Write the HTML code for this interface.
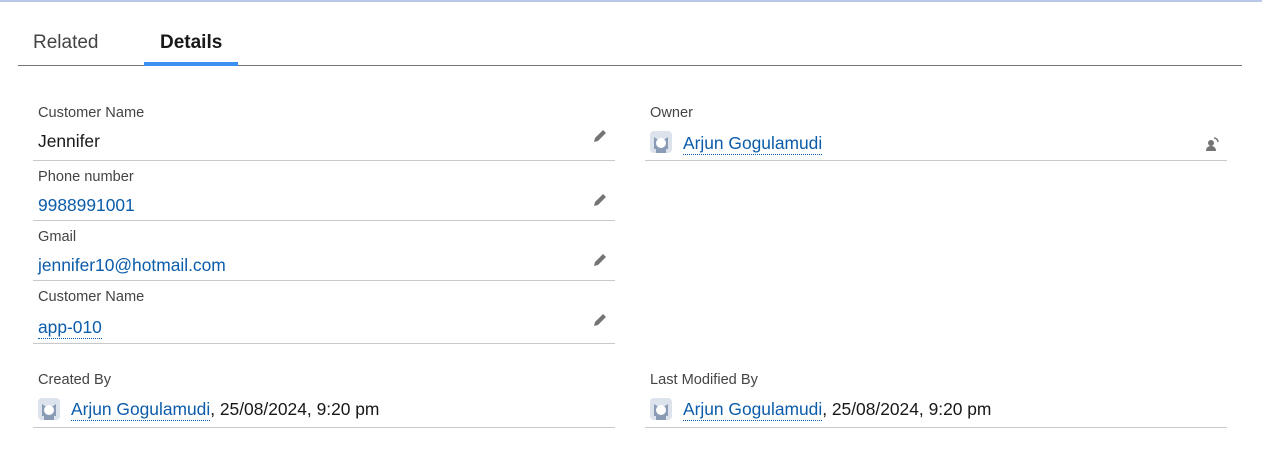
<!DOCTYPE html>
<html><head><style>
body{margin:0;width:1262px;height:474px;background:#fff;font-family:"Liberation Sans",sans-serif;position:relative;overflow:hidden;color:#181818}
.top{position:absolute;left:0;top:0;width:1262px;height:2px;background:#b7c9e6}
.t{position:absolute;font-size:19px;top:32px}
.tabline{position:absolute;left:18px;top:65px;width:1224px;height:1px;background:#747474}
.sel{position:absolute;left:144px;top:62px;width:94px;height:4px;background:#3a8ff0}
.lab{position:absolute;font-size:14.6px;color:#444}
.val{position:absolute;font-size:17.4px;color:#181818}
.lnk{color:#0b5cab}
.dot{border-bottom:1px dotted #0b5cab;padding-bottom:1px}
.hr{position:absolute;height:1px;background:#c9c9c9}
.pen{position:absolute;width:18px;height:18px}
.av{position:absolute;width:22px;height:22px;border-radius:4px;background:#dde3ec}
</style></head><body>
<div class="top"></div>
<div class="t" style="left:33px;color:#444">Related</div>
<div class="t" style="left:160px;font-weight:bold">Details</div>
<div class="tabline"></div><div class="sel"></div>

<div class="lab" style="left:38px;top:105px">Customer Name</div>
<div class="val" style="left:38px;top:131px">Jennifer</div>
<div class="hr" style="left:33px;top:160px;width:582px"></div>
<div class="lab" style="left:38px;top:169px">Phone number</div>
<div class="val lnk" style="left:38px;top:195px">9988991001</div>
<div class="hr" style="left:33px;top:220px;width:582px"></div>
<div class="lab" style="left:38px;top:229px">Gmail</div>
<div class="val lnk" style="left:38px;top:255px">jennifer10@hotmail.com</div>
<div class="hr" style="left:33px;top:280px;width:582px"></div>
<div class="lab" style="left:38px;top:289px">Customer Name</div>
<div class="val lnk" style="left:38px;top:317px"><span class="dot">app-010</span></div>
<div class="hr" style="left:33px;top:343px;width:582px"></div>

<svg class="pen" style="left:591px;top:127px" viewBox="0 0 18 18"><path d="M3 15l1-4 8-8 3 3-8 8z" fill="#747474"/></svg>
<svg class="pen" style="left:591px;top:191px" viewBox="0 0 18 18"><path d="M3 15l1-4 8-8 3 3-8 8z" fill="#747474"/></svg>
<svg class="pen" style="left:591px;top:251px" viewBox="0 0 18 18"><path d="M3 15l1-4 8-8 3 3-8 8z" fill="#747474"/></svg>
<svg class="pen" style="left:591px;top:311px" viewBox="0 0 18 18"><path d="M3 15l1-4 8-8 3 3-8 8z" fill="#747474"/></svg>

<div class="lab" style="left:650px;top:105px">Owner</div>
<div class="av" style="left:650px;top:131px"><svg width="22" height="22" viewBox="0 0 22 22"><path d="M4 6l3 2h8l3-2v12H4z" fill="#8a9bb5"/><circle cx="11" cy="12" r="5" fill="#fff"/><rect x="6" y="18" width="10" height="4" fill="#8a9bb5"/></svg></div>
<div class="val" style="left:683px;top:133px"><span class="lnk dot">Arjun Gogulamudi</span></div>
<svg style="position:absolute;left:1204px;top:136px" width="16" height="16" viewBox="0 0 16 16"><circle cx="7" cy="7" r="3" fill="#747474"/><path d="M2 15c0-4 3-5 5-5s5 1 5 5z" fill="#747474"/><path d="M10 2a4 4 0 0 1 4 4" stroke="#747474" stroke-width="1.5" fill="none"/></svg>
<div class="hr" style="left:645px;top:160px;width:582px"></div>

<div class="lab" style="left:38px;top:372px">Created By</div>
<div class="av" style="left:38px;top:398px"><svg width="22" height="22" viewBox="0 0 22 22"><path d="M4 6l3 2h8l3-2v12H4z" fill="#8a9bb5"/><circle cx="11" cy="12" r="5" fill="#fff"/><rect x="6" y="18" width="10" height="4" fill="#8a9bb5"/></svg></div>
<div class="val" style="left:71px;top:399px"><span class="lnk dot">Arjun Gogulamudi</span>, 25/08/2024, 9:20 pm</div>
<div class="hr" style="left:33px;top:427px;width:582px"></div>

<div class="lab" style="left:650px;top:372px">Last Modified By</div>
<div class="av" style="left:650px;top:398px"><svg width="22" height="22" viewBox="0 0 22 22"><path d="M4 6l3 2h8l3-2v12H4z" fill="#8a9bb5"/><circle cx="11" cy="12" r="5" fill="#fff"/><rect x="6" y="18" width="10" height="4" fill="#8a9bb5"/></svg></div>
<div class="val" style="left:683px;top:399px"><span class="lnk dot">Arjun Gogulamudi</span>, 25/08/2024, 9:20 pm</div>
<div class="hr" style="left:645px;top:427px;width:582px"></div>
</body></html>
